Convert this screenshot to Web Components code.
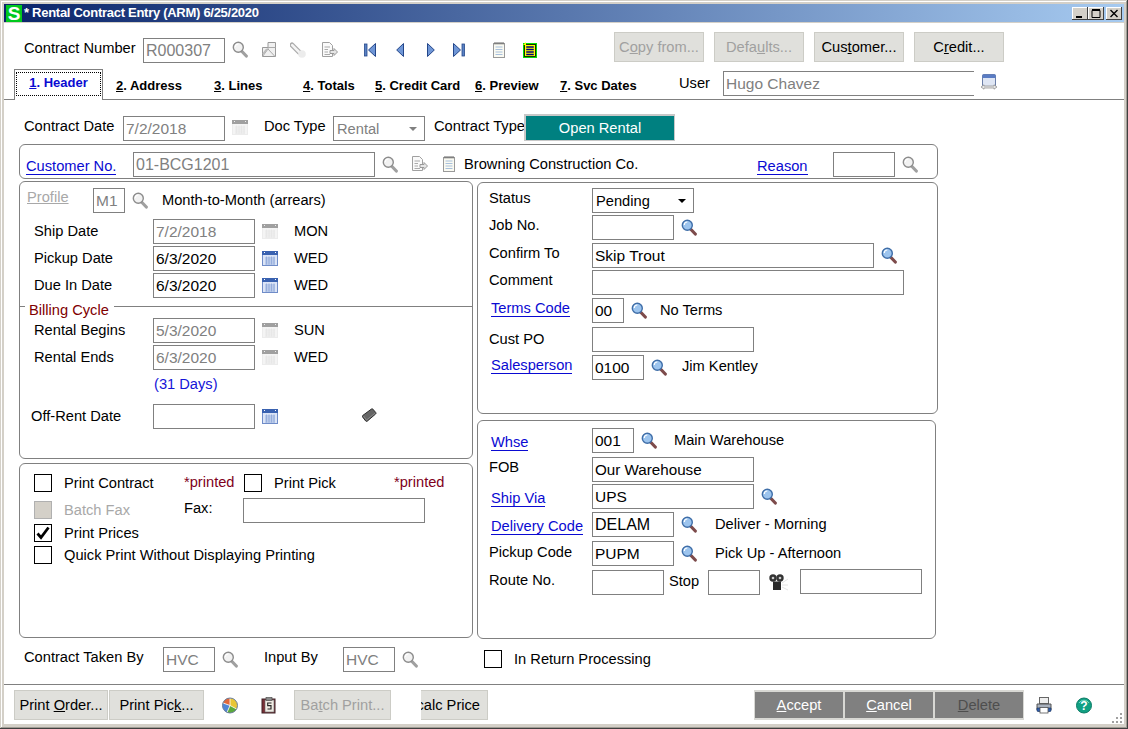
<!DOCTYPE html>
<html lang="en"><head><meta charset="utf-8"><title>Rental Contract Entry</title>
<style>html,body{margin:0;padding:0;background:#d4d0c8}</style></head>
<body>
<rental-contract></rental-contract>

<template id="tpl">
<style>
:host{display:block;width:1128px;height:729px;box-sizing:border-box;overflow:hidden;background:#d4d0c8;
 font:14.67px/17px "Liberation Sans",Arial,sans-serif;color:#000;
 padding:4px 4px 5px 4px;box-shadow:inset -1px -1px 0 #404040,inset 1px 1px 0 #d4d0c8,inset -2px -2px 0 #a09c94,inset 2px 2px 0 #fff}
.main{height:701px;background:#fff;display:flex;flex-direction:column;margin-top:1px}
.r{display:flex;align-items:flex-start;flex:none}
.c{display:flex;flex-direction:column;flex:none}
.t0{margin-top:0}.t1{margin-top:1px}.t2{margin-top:2px}.t3{margin-top:3px}.t4{margin-top:4px}.t5{margin-top:5px}.t6{margin-top:6px}.t7{margin-top:7px}.t8{margin-top:8px}.t9{margin-top:9px}.t10{margin-top:10px}.t11{margin-top:11px}
.l{flex:none;white-space:nowrap}
.ic{margin-left:7px;margin-top:4px}
.cal{margin-left:7px;margin-top:5px}
.red{color:#800020}
.off{color:#a8a8a8}
.days{color:#1414d8}
</style>
<sage-titlebar>* Rental Contract Entry (ARM) 6/25/2020</sage-titlebar>
<div class="main">
  <!-- toolbar -->
  <div class="r" style="height:37px;margin-top:9px">
    <span class="l t8" style="margin-left:20px;width:119px">Contract Number</span>
    <sage-field class="t6" off style="width:82px;font-size:16px">R000307</sage-field>
    <sage-icon class="t9" style="margin-left:7px" name="search-off"></sage-icon>
    <sage-icon class="t10" style="margin-left:14px" name="split"></sage-icon>
    <sage-icon class="t10" style="margin-left:14px" name="flash"></sage-icon>
    <sage-icon class="t10" style="margin-left:15px" name="docarrow"></sage-icon>
    <sage-icon class="t10" style="margin-left:26px" name="first"></sage-icon>
    <sage-icon class="t10" style="margin-left:20px" name="prev"></sage-icon>
    <sage-icon class="t10" style="margin-left:23px" name="next"></sage-icon>
    <sage-icon class="t10" style="margin-left:18px" name="last"></sage-icon>
    <sage-icon class="t10" style="margin-left:28px" name="note"></sage-icon>
    <sage-icon class="t10" style="margin-left:18px" name="yellow"></sage-icon>
    <sage-button off style="margin-left:77px;width:90px">C<u>o</u>py from...</sage-button>
    <sage-button off style="margin-left:10px;width:90px">Defa<u>u</u>lts...</sage-button>
    <sage-button style="margin-left:10px;width:90px">Cus<u>t</u>omer...</sage-button>
    <sage-button style="margin-left:10px;width:90px">C<u>r</u>edit...</sage-button>
  </div>
  <!-- tabs -->
  <div class="r" style="height:30px;border-bottom:1px solid #808080">
    <sage-tab active style="margin-left:10px;width:89px"><u>1</u>. Header</sage-tab>
    <sage-tab style="margin-left:13px;width:98px"><u>2</u>. Address</sage-tab>
    <sage-tab style="width:89px"><u>3</u>. Lines</sage-tab>
    <sage-tab style="width:72px"><u>4</u>. Totals</sage-tab>
    <sage-tab style="width:100px"><u>5</u>. Credit Card</sage-tab>
    <sage-tab style="width:85px"><u>6</u>. Preview</sage-tab>
    <sage-tab style="width:119px"><u>7</u>. Svc Dates</sage-tab>
    <span class="l t6" style="width:44px">User</span>
    <sage-field class="t2" off style="width:251px;border-right:0">Hugo Chavez</sage-field>
    <sage-icon class="t5" style="margin-left:7px" name="window"></sage-icon>
  </div>
  <!-- contract date -->
  <div class="r" style="margin-top:14px">
    <span class="l t4" style="margin-left:20px;width:99px">Contract Date</span>
    <sage-field class="t2" off style="width:102px">7/2/2018</sage-field>
    <sage-icon class="t6" style="margin-left:7px" name="cal-off"></sage-icon>
    <span class="l t4" style="margin-left:16px;width:69px">Doc Type</span>
    <sage-select class="t2" off style="width:92px">Rental</sage-select>
    <span class="l t4" style="margin-left:9px;width:90px;overflow:hidden">Contract Type</span>
    <sage-badge style="width:151px">Open Rental</sage-badge>
  </div>
  <!-- customer -->
  <sage-panel style="margin:3px 0 0 15px;width:919px;height:35px">
    <div class="r t7">
      <sage-link class="t6" style="margin-left:6px;width:107px">Customer No.</sage-link>
      <sage-field off style="width:242px;font-size:16px">01-BCG1201</sage-field>
      <sage-icon class="ic" name="search-off"></sage-icon>
      <sage-icon class="t4" style="margin-left:14px" name="docarrow"></sage-icon>
      <sage-icon class="t4" style="margin-left:15px" name="note"></sage-icon>
      <span class="l t4" style="margin-left:9px;width:293px">Browning Construction Co.</span>
      <sage-link class="t6" style="width:76px">Reason</sage-link>
      <sage-field style="width:62px"></sage-field>
      <sage-icon class="ic" name="search-off"></sage-icon>
    </div>
  </sage-panel>
  <!-- columns -->
  <div class="r" style="margin:2px 0 0 15px;height:458px">
    <div class="c" style="width:454px">
      <sage-panel style="height:278px">
        <div class="r t6">
          <span class="l off t1" style="margin-left:7px;width:66px;text-decoration:underline">Profile</span>
          <sage-field off style="width:32px">M1</sage-field>
          <sage-icon class="ic" name="search-off"></sage-icon>
          <span class="l t4" style="margin-left:14px">Month-to-Month (arrears)</span>
        </div>
        <div class="r t6">
          <span class="l t4" style="margin-left:14px;width:119px">Ship Date</span>
          <sage-field off style="width:102px">7/2/2018</sage-field>
          <sage-icon class="cal" name="cal-off"></sage-icon>
          <span class="l t4" style="margin-left:16px">MON</span>
        </div>
        <div class="r t2">
          <span class="l t4" style="margin-left:14px;width:119px">Pickup Date</span>
          <sage-field style="width:102px">6/3/2020</sage-field>
          <sage-icon class="cal" name="cal"></sage-icon>
          <span class="l t4" style="margin-left:16px">WED</span>
        </div>
        <div class="r t2">
          <span class="l t4" style="margin-left:14px;width:119px">Due In Date</span>
          <sage-field style="width:102px">6/3/2020</sage-field>
          <sage-icon class="cal" name="cal"></sage-icon>
          <span class="l t4" style="margin-left:16px">WED</span>
        </div>
        <sage-divider class="t8">Billing Cycle</sage-divider>
        <div class="r t11">
          <span class="l t4" style="margin-left:14px;width:119px">Rental Begins</span>
          <sage-field off style="width:102px">5/3/2020</sage-field>
          <sage-icon class="cal" name="cal-off"></sage-icon>
          <span class="l t4" style="margin-left:16px">SUN</span>
        </div>
        <div class="r t2">
          <span class="l t4" style="margin-left:14px;width:119px">Rental Ends</span>
          <sage-field off style="width:102px">6/3/2020</sage-field>
          <sage-icon class="cal" name="cal-off"></sage-icon>
          <span class="l t4" style="margin-left:16px">WED</span>
        </div>
        <div class="r t6"><span class="l days" style="margin-left:134px">(31 Days)</span></div>
        <div class="r t11">
          <span class="l t4" style="margin-left:11px;width:122px">Off-Rent Date</span>
          <sage-field style="width:102px"></sage-field>
          <sage-icon class="cal" name="cal"></sage-icon>
          <sage-icon class="t4" style="margin-left:84px" name="eraser"></sage-icon>
        </div>
      </sage-panel>
      <sage-panel style="height:175px;margin-top:4px">
        <div class="r t10">
          <sage-check style="margin-left:14px"></sage-check>
          <span class="l t1" style="margin-left:12px;width:120px">Print Contract</span>
          <span class="l red" style="width:60px">*printed</span>
          <sage-check></sage-check>
          <span class="l t1" style="margin-left:12px;width:120px">Print Pick</span>
          <span class="l red">*printed</span>
        </div>
        <div class="r t6">
          <sage-check class="t3" off style="margin-left:14px"></sage-check>
          <span class="l off t4" style="margin-left:12px;width:120px">Batch Fax</span>
          <span class="l t2" style="width:59px">Fax:</span>
          <sage-field style="width:182px"></sage-field>
        </div>
        <div class="r t1">
          <sage-check checked style="margin-left:14px"></sage-check>
          <span class="l t1" style="margin-left:12px">Print Prices</span>
        </div>
        <div class="r t4">
          <sage-check style="margin-left:14px"></sage-check>
          <span class="l t1" style="margin-left:12px">Quick Print Without Displaying Printing</span>
        </div>
      </sage-panel>
    </div>
    <div class="c" style="width:461px;margin-left:4px;margin-top:1px">
      <sage-panel style="height:232px">
        <div class="r t5">
          <span class="l t2" style="margin-left:11px;width:103px">Status</span>
          <sage-select style="width:102px">Pending</sage-select>
        </div>
        <div class="r t2">
          <span class="l t2" style="margin-left:11px;width:103px">Job No.</span>
          <sage-field style="width:82px"></sage-field>
          <sage-icon class="ic" name="search"></sage-icon>
        </div>
        <div class="r t3">
          <span class="l t2" style="margin-left:11px;width:103px">Confirm To</span>
          <sage-field style="width:282px">Skip Trout</sage-field>
          <sage-icon class="ic" name="search"></sage-icon>
        </div>
        <div class="r t2">
          <span class="l t2" style="margin-left:11px;width:103px">Comment</span>
          <sage-field style="width:312px"></sage-field>
        </div>
        <div class="r t3">
          <sage-link class="t2" style="margin-left:13px;width:101px">Terms Code</sage-link>
          <sage-field style="width:32px">00</sage-field>
          <sage-icon class="ic" name="search"></sage-icon>
          <span class="l t4" style="margin-left:13px">No Terms</span>
        </div>
        <div class="r t4">
          <span class="l t4" style="margin-left:11px;width:103px">Cust PO</span>
          <sage-field style="width:162px"></sage-field>
        </div>
        <div class="r t3">
          <sage-link class="t2" style="margin-left:13px;width:101px">Salesperson</sage-link>
          <sage-field style="width:52px">0100</sage-field>
          <sage-icon class="ic" name="search"></sage-icon>
          <span class="l t3" style="margin-left:15px">Jim Kentley</span>
        </div>
      </sage-panel>
      <sage-panel style="height:219px;width:459px;margin-top:6px">
        <div class="r t7">
          <sage-link class="t6" style="margin-left:13px;width:101px">Whse</sage-link>
          <sage-field style="width:42px">001</sage-field>
          <sage-icon class="ic" name="search"></sage-icon>
          <span class="l t4" style="margin-left:17px">Main Warehouse</span>
        </div>
        <div class="r t4">
          <span class="l t2" style="margin-left:11px;width:103px">FOB</span>
          <sage-field style="width:162px;font-size:15.2px">Our Warehouse</sage-field>
        </div>
        <div class="r t2">
          <sage-link class="t6" style="margin-left:13px;width:101px">Ship Via</sage-link>
          <sage-field style="width:162px">UPS</sage-field>
          <sage-icon class="ic" name="search"></sage-icon>
        </div>
        <div class="r t3">
          <sage-link class="t6" style="margin-left:13px;width:101px">Delivery Code</sage-link>
          <sage-field style="width:82px;font-size:16px">DELAM</sage-field>
          <sage-icon class="ic" name="search"></sage-icon>
          <span class="l t4" style="margin-left:18px">Deliver - Morning</span>
        </div>
        <div class="r t4">
          <span class="l t3" style="margin-left:11px;width:103px">Pickup Code</span>
          <sage-field style="width:82px">PUPM</sage-field>
          <sage-icon class="ic" name="search"></sage-icon>
          <span class="l t4" style="margin-left:18px">Pick Up - Afternoon</span>
        </div>
        <div class="r t3">
          <span class="l t3" style="margin-left:11px;width:103px">Route No.</span>
          <sage-field class="t1" style="width:72px"></sage-field>
          <span class="l t4" style="margin-left:5px;width:39px">Stop</span>
          <sage-field class="t1" style="width:52px"></sage-field>
          <sage-icon class="t5" style="margin-left:9px" name="reels"></sage-icon>
          <sage-field style="margin-left:12px;width:122px"></sage-field>
        </div>
      </sage-panel>
    </div>
  </div>
  <!-- taken by -->
  <div class="r t8">
    <span class="l t2" style="margin-left:20px;width:139px">Contract Taken By</span>
    <sage-field off style="width:52px">HVC</sage-field>
    <sage-icon class="ic" name="search-off"></sage-icon>
    <span class="l t2" style="margin-left:26px;width:79px">Input By</span>
    <sage-field off style="width:52px">HVC</sage-field>
    <sage-icon class="ic" name="search-off"></sage-icon>
    <sage-check class="t3" style="margin-left:66px"></sage-check>
    <span class="l t4" style="margin-left:12px">In Return Processing</span>
  </div>
  <!-- footer -->
  <div class="r" style="margin-top:auto;padding-top:5px;height:34px;border-top:1px solid #808080;position:relative">
    <sage-button style="margin-left:10px;width:94px">Print <u>O</u>rder...</sage-button>
    <sage-button style="margin-left:1px;width:95px">Print Pic<u>k</u>...</sage-button>
    <sage-icon class="t7" style="margin-left:18px" name="pie"></sage-icon>
    <sage-icon class="t7" style="margin-left:23px" name="clip"></sage-icon>
    <sage-button off style="margin-left:18px;width:97px">Ba<u>t</u>ch Print...</sage-button>
    <sage-button clip style="margin-left:30px;width:67px">calc Price</sage-button>
    <sage-button dark style="margin-left:266px;width:90px"><u>A</u>ccept</sage-button>
    <sage-button dark style="width:90px"><u>C</u>ancel</sage-button>
    <sage-button dark off style="width:90px"><u>D</u>elete</sage-button>
    <sage-icon class="t7" style="margin-left:12px" name="printer"></sage-icon>
    <sage-icon class="t7" style="margin-left:24px" name="help"></sage-icon>
    <sage-icon style="position:absolute;right:1px;bottom:0" name="grip"></sage-icon>
  </div>
</div>
</template>

<script>
const ICONS = {
 'search':`<svg width="16" height="17" viewBox="0 0 16 17"><path d="M10 10.5L14.3 15" stroke="#7d4b4b" stroke-width="3.2" stroke-linecap="round"/><circle cx="6.3" cy="6.3" r="5" fill="#9cc4ee" stroke="#3f6ea8" stroke-width="1.4"/><path d="M3.3 6a3 3 0 0 1 3-3" stroke="#fff" fill="none" stroke-width="1.2"/></svg>`,
 'search-off':`<svg width="16" height="17" viewBox="0 0 16 17"><path d="M10 10.5L14.3 15" stroke="#a0a0a0" stroke-width="3.2" stroke-linecap="round"/><circle cx="6.3" cy="6.3" r="5" fill="#f2f2f2" stroke="#8c8c8c" stroke-width="1.4"/><path d="M3.3 6a3 3 0 0 1 3-3" stroke="#fff" fill="none" stroke-width="1.2"/></svg>`,
 'split':`<svg width="14" height="16" viewBox="0 0 14 16"><path d="M.5 5.5H6V.5H13.5V14.5H.5Z" fill="#f0f0f0" stroke="#999"/><path d="M6 5.5H13.5M.5 14.5L6 7V5.5M6 7L13 14.5" stroke="#aaa" fill="none"/><path d="M1 12L5 7" stroke="#bbb" stroke-width="2"/></svg>`,
 'flash':`<svg width="17" height="16" viewBox="0 0 17 16"><path d="M2 3L9 10" stroke="#aaa" stroke-width="5" stroke-linecap="round"/><path d="M2.2 3.2L9 10" stroke="#f4f4f4" stroke-width="2.6" stroke-linecap="round"/><circle cx="12" cy="12" r="3.8" fill="#ececec"/></svg>`,
 'docarrow':`<svg width="16" height="16" viewBox="0 0 16 16"><path d="M.5.5H7.5L10.5 3.5V14.5H.5Z" fill="#fafafa" stroke="#a0a0a0"/><path d="M2.5 5H8M2.5 7.5H6M2.5 10H6M2.5 12.5H8" stroke="#aaa"/><path d="M8 8.5H12V6.5L15.5 10L12 13.5V11.5H8Z" fill="#e6e6e6" stroke="#999"/></svg>`,
 'first':`<svg width="12" height="16" viewBox="0 0 12 16"><rect x=".5" y="2" width="2.5" height="12" fill="#5a82c4" stroke="#24478a" stroke-width=".8"/><path d="M11.5 1.5L4.5 8L11.5 14.5Z" fill="#6f96d6" stroke="#24478a"/></svg>`,
 'prev':`<svg width="8" height="16" viewBox="0 0 8 16"><path d="M7.5 1.5L.7 8L7.5 14.5Z" fill="#6f96d6" stroke="#24478a"/></svg>`,
 'next':`<svg width="8" height="16" viewBox="0 0 8 16"><path d="M.5 1.5L7.3 8L.5 14.5Z" fill="#6f96d6" stroke="#24478a"/></svg>`,
 'last':`<svg width="12" height="16" viewBox="0 0 12 16"><path d="M.5 1.5L7.5 8L.5 14.5Z" fill="#6f96d6" stroke="#24478a"/><rect x="9" y="2" width="2.5" height="12" fill="#5a82c4" stroke="#24478a" stroke-width=".8"/></svg>`,
 'note':`<svg width="12" height="16" viewBox="0 0 12 16"><rect x=".5" y="1.5" width="11" height="14" fill="#fafaf2" stroke="#999"/><path d="M2 0V2.5M4 0V2.5M6 0V2.5M8 0V2.5M10 0V2.5" stroke="#666"/><path d="M2.5 5H9.5M2.5 7.5H9.5M2.5 10H9.5M2.5 12.5H9.5" stroke="#a8c0dc"/></svg>`,
 'yellow':`<svg width="14" height="16" viewBox="0 0 14 16"><rect x="0" y="1" width="14" height="15" fill="#00e000"/><rect x="1.5" y="2.5" width="11" height="12" fill="#ffff00" stroke="#000" stroke-width=".8"/><path d="M3.2 5H10.8M3.2 7.5H10.8M3.2 10H10.8M3.2 12.5H10.8" stroke="#000080" stroke-width="1.3"/><path d="M0 3L3 0V3Z" fill="#ffff00"/></svg>`,
 'cal':`<svg width="16" height="15" viewBox="0 0 16 15"><rect x=".5" y=".5" width="15" height="14" fill="#dbe4f6" stroke="#6f8cc8"/><rect x="0" y="0" width="16" height="4" fill="#3a62b0"/><path d="M2 1.5h1M13 1.5h1" stroke="#fff"/><path d="M3 7h10M3 9h10M3 11h10M3 13h10M4.5 5.5v8M7 5.5v8M9.5 5.5v8M12 5.5v8" stroke="#8ca4d8" stroke-width=".8"/></svg>`,
 'cal-off':`<svg width="16" height="15" viewBox="0 0 16 15"><rect x=".5" y=".5" width="15" height="14" fill="#f4f4f4" stroke="#ececec"/><rect x="0" y="0" width="16" height="4" fill="#a0a0a0"/><path d="M2 1.5h1M13 1.5h1" stroke="#eee"/><path d="M3 7h10M3 9h10M3 11h10M3 13h10M4.5 5.5v8M7 5.5v8M9.5 5.5v8M12 5.5v8" stroke="#e4e4e4" stroke-width=".8"/></svg>`,
 'eraser':`<svg width="15" height="15" viewBox="0 0 15 15"><path d="M.7 7.5L9.5 1Q10.3.5 10.9 1.2L13.8 4.6Q14.3 5.4 13.6 6L5.2 13.2Q4.4 13.8 3.7 13L.6 9Q.2 8.1.7 7.5Z" fill="#666" stroke="#2e2e2e"/><path d="M1.5 8L4.5 12L13.2 5" stroke="#8a8a8a" fill="none"/></svg>`,
 'window':`<svg width="16" height="17" viewBox="0 0 16 17"><rect x="1.5" y=".5" width="13" height="12" rx="1.5" fill="#dfe6f4" stroke="#6b7fa8"/><rect x="1.5" y=".5" width="13" height="3.5" fill="#5a7cc4"/><path d="M0 13L3 10.8V12H13V10.8L16 13L13 15.2V14H3V15.2Z" fill="#e8e8e8" stroke="#888" stroke-width=".7"/></svg>`,
 'reels':`<svg width="19" height="17" viewBox="0 0 19 17"><circle cx="4" cy="4" r="3.7" fill="#333"/><circle cx="11" cy="4" r="3.7" fill="#333"/><circle cx="4" cy="4" r="1.3" fill="#ccc"/><circle cx="11" cy="4" r="1.3" fill="#ccc"/><rect x="4" y="7.5" width="8" height="8.5" fill="#2a2a2a"/><path d="M13 9L19 5M13 11L19 11M13 13L19 16" stroke="#e4e4e4"/></svg>`,
 'pie':`<svg width="16" height="17" viewBox="0 0 16 17"><circle cx="8" cy="8.5" r="7.5" fill="#e9c636"/><path d="M8 8.5V1A7.5 7.5 0 0 0 1 6Z" fill="#e2683a"/><path d="M8 8.5L1 6A7.5 7.5 0 0 0 5 15.5Z" fill="#4f86d6"/><path d="M8 8.5L5 15.5A7.5 7.5 0 0 0 14.5 12Z" fill="#5aaa3c"/><path d="M8 8.5V1M8 8.5L1 6M8 8.5L5 15.5M8 8.5L14.5 12" stroke="#fff" stroke-width=".8"/><circle cx="8" cy="8.5" r="7.5" fill="none" stroke="#6a7ea0"/></svg>`,
 'clip':`<svg width="15" height="17" viewBox="0 0 15 17"><rect x="1" y="2" width="13" height="14" fill="#7a2f36" stroke="#3e2226"/><rect x="4" y="3" width="9" height="12" fill="#f0ece4" stroke="#666" stroke-width=".6"/><rect x="5" y="0" width="6" height="3.5" fill="#8a8a8a" stroke="#444" stroke-width=".6"/><path d="M10.5 6H6.7V8.6H10V12H6.5" stroke="#222" fill="none" stroke-width="1.1"/></svg>`,
 'printer':`<svg width="16" height="17" viewBox="0 0 16 17"><rect x="3.5" y=".5" width="9" height="6" fill="#eee" stroke="#666"/><path d="M1 7H15V13H1Z" fill="#a9b1bd" stroke="#555"/><path d="M1 11H15V13.5Q15 14.5 14 14.5H2Q1 14.5 1 13.5Z" fill="#2f5fb0" stroke="#20365f" stroke-width=".7"/><rect x="4" y="10.5" width="8" height="5.5" fill="#fff" stroke="#555" stroke-width=".8"/></svg>`,
 'help':`<svg width="16" height="17" viewBox="0 0 16 17"><circle cx="8" cy="8.5" r="7.5" fill="#11a083" stroke="#0a7a64"/><path d="M3 6A6 6 0 0 1 13 6" stroke="#7ad9c4" fill="none"/><text x="8" y="13" text-anchor="middle" font-family="Liberation Sans,Arial,sans-serif" font-weight="700" font-size="12" fill="#fff">?</text></svg>`,
 'grip':`<svg width="11" height="11" viewBox="0 0 11 11" fill="#a0a0a0"><rect x="8" y="0" width="2" height="2"/><rect x="4" y="4" width="2" height="2"/><rect x="8" y="4" width="2" height="2"/><rect x="0" y="8" width="2" height="2"/><rect x="4" y="8" width="2" height="2"/><rect x="8" y="8" width="2" height="2"/></svg>`
};
class Base extends HTMLElement{
  constructor(){super();this.attachShadow({mode:'open'}).innerHTML=this.constructor.html;}
}
class RentalContract extends HTMLElement{
  constructor(){super();this.attachShadow({mode:'open'}).appendChild(document.getElementById('tpl').content.cloneNode(true));}
}
class SageTitlebar extends Base{static html=`<style>
:host{display:flex;align-items:center;height:18px;background:linear-gradient(90deg,#0a246a,#a6caf0);color:#fff;font:700 13px/18px "Liberation Sans",Arial,sans-serif;white-space:nowrap}
.s{width:16px;height:17px;margin-left:2px;background:#00c81e;color:#fff;font:700 19px/17px "Liberation Sans",Arial,sans-serif;text-align:center;flex:none}
.t{margin-left:2px;flex:1;letter-spacing:-.28px}
.b{width:16px;height:13px;box-sizing:border-box;background:#d4d0c8;box-shadow:inset -1px -1px 0 #404040,inset 1px 1px 0 #fff;flex:none;display:block}
.g{display:flex;margin-right:2px}
.x{margin-left:2px}
</style><span class="s">S</span><span class="t"><slot></slot></span><span class="g">
<svg class="b" viewBox="0 0 16 13"><rect x="4" y="9" width="6" height="2" fill="#000"/></svg>
<svg class="b" viewBox="0 0 16 13"><path d="M4 3.5H12V10.5H4ZM4 2.5H12" fill="none" stroke="#000"/></svg>
<svg class="b x" viewBox="0 0 16 13"><path d="M4.5 3L11.5 10M11.5 3L4.5 10" stroke="#000" stroke-width="1.4"/></svg></span>`}
class SageField extends Base{static html=`<style>
:host{display:block;flex:none;box-sizing:border-box;height:25px;border:1px solid #808080;background:#fff;padding:0 2px;font:15.5px/23px "Liberation Sans",Arial,sans-serif;color:#000;white-space:nowrap;overflow:hidden}
:host([off]){color:#808080}
</style><slot></slot>`}
class SageSelect extends Base{static html=`<style>
:host{display:flex;align-items:center;justify-content:space-between;flex:none;box-sizing:border-box;height:25px;border:1px solid #808080;background:#fff;padding:0 6px 0 3px;font:14.67px/23px "Liberation Sans",Arial,sans-serif;color:#000}
:host([off]){color:#808080}
span{margin-top:2px}
i{width:0;height:0;border:4px solid transparent;border-top:4px solid currentColor;border-bottom:0;margin-right:1px}
</style><span><slot></slot></span><i></i>`}
class SageBadge extends Base{static html=`<style>
:host{display:flex;align-items:center;justify-content:center;flex:none;box-sizing:border-box;height:27px;background:#008080;color:#fff;border:1px solid #c8c8c8;border-left-width:2px;border-top-width:2px}
</style><slot></slot>`}
class SagePanel extends Base{static html=`<style>
:host{display:flex;flex-direction:column;flex:none;box-sizing:border-box;border:1px solid #808080;border-radius:6px;background:#fff}
</style><slot></slot>`}
class SageDivider extends Base{static html=`<style>
:host{display:block;height:1px;background:#808080;position:relative;flex:none}
span{position:absolute;left:5px;top:-4px;background:#fff;padding:0 5px 0 4px;color:#800000;line-height:17px;white-space:nowrap}
</style><span><slot></slot></span>`}
class SageLink extends Base{static html=`<style>
:host{display:block;flex:none;color:#0a0ad2;white-space:nowrap}
span{border-bottom:1px solid #0a0ad2;padding-bottom:0}
</style><span><slot></slot></span>`}
class SageCheck extends Base{static html=`<style>
:host{display:block;flex:none;width:18px;height:18px;box-sizing:border-box;border:1.4px solid #000;background:#fff}
:host([off]){background:#d4d0c8;border-color:#b0b0b0}
svg{display:none;width:100%;height:100%}
:host([checked]) svg{display:block}
</style><svg viewBox="0 0 16 16"><path d="M2.5 8.5L6 12.5L13.5 2.5" fill="none" stroke="#000" stroke-width="2.8"/></svg>`}
class SageTab extends Base{static html=`<style>
:host{display:block;flex:none;box-sizing:border-box;height:30px;padding-top:8px;font:700 13px/17px "Liberation Sans",Arial,sans-serif;color:#000;white-space:nowrap}
:host([active]){height:31px;padding:2px 0 0;border:1px solid #808080;border-bottom:0;background:#fff;color:#0a0ad2;text-align:center}
div{display:contents}
:host([active]) div{display:block;margin:0 1px;height:22px;line-height:20px;border:1px dotted #000}
</style><div><slot></slot></div>`}
class SageButton extends Base{static html=`<style>
:host{display:flex;align-items:center;justify-content:center;flex:none;box-sizing:border-box;height:30px;background:#e0e0dc;border:1px solid #ccccc6;color:#000;white-space:nowrap;overflow:hidden}
:host([off]){color:#a0a0a0}
:host([clip]){justify-content:flex-end;padding-right:7px;border-left:0}
:host([dark]){background:#808080;color:#fff;border:2px solid #d8d8d4;border-width:2px 1px}
:host([dark][off]){color:#4e4e4e}
</style><span><slot></slot></span>`}
class SageIcon extends HTMLElement{
  constructor(){super();this.attachShadow({mode:'open'});}
  connectedCallback(){this.shadowRoot.innerHTML='<style>:host{display:block;flex:none;line-height:0}svg{display:block}</style>'+(ICONS[this.getAttribute('name')]||'');}
}
customElements.define('sage-titlebar',SageTitlebar);
customElements.define('sage-field',SageField);
customElements.define('sage-select',SageSelect);
customElements.define('sage-badge',SageBadge);
customElements.define('sage-panel',SagePanel);
customElements.define('sage-divider',SageDivider);
customElements.define('sage-link',SageLink);
customElements.define('sage-check',SageCheck);
customElements.define('sage-tab',SageTab);
customElements.define('sage-button',SageButton);
customElements.define('sage-icon',SageIcon);
customElements.define('rental-contract',RentalContract);
</script>
</body></html>
